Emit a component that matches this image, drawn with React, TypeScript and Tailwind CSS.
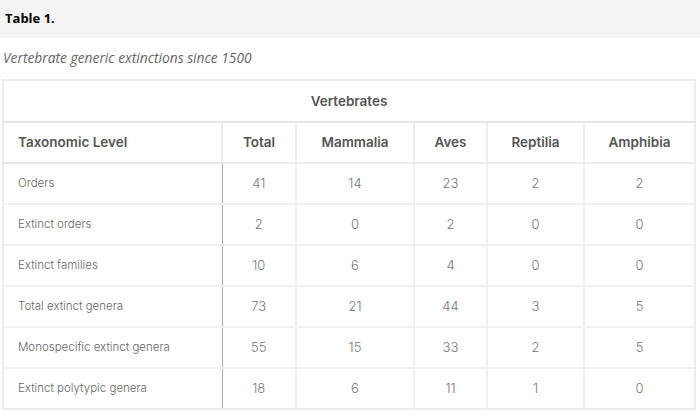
import React from "react";

const rows = [
  ["Orders", "41", "14", "23", "2", "2"],
  ["Extinct orders", "2", "0", "2", "0", "0"],
  ["Extinct families", "10", "6", "4", "0", "0"],
  ["Total extinct genera", "73", "21", "44", "3", "5"],
  ["Monospecific extinct genera", "55", "15", "33", "2", "5"],
  ["Extinct polytypic genera", "18", "6", "11", "1", "0"],
];

const heads = ["Total", "Mammalia", "Aves", "Reptilia", "Amphibia"];

export default function App() {
  return (
    <div className="w-[700px] h-[414px] bg-white overflow-hidden">
      {/* Title bar */}
      <div className="h-[38px] bg-[#f4f4f4] px-[5px] flex items-center">
        <span className="font-['Open_Sans',sans-serif] font-bold text-[13px] text-black">Table 1.</span>
      </div>

      <p className="mt-[11px] pl-[3px] font-['Open_Sans',sans-serif] italic text-[13.8px] text-[#666] leading-[18px]">
        Vertebrate generic extinctions since 1500
      </p>

      <table className="mt-[12px] ml-[2px] w-[694px] table-fixed border-collapse border-2 border-[#ececec] font-['Inter',sans-serif]">
        <colgroup>
          <col className="w-[219px]" />
          <col className="w-[74px]" />
          <col className="w-[118px]" />
          <col className="w-[73px]" />
          <col className="w-[97px]" />
          <col />
        </colgroup>
        <thead>
          <tr className="h-[42px]">
            <th colSpan={6} className="text-center text-[13.5px] font-semibold text-[#555] border-b-2 border-[#e6e6e6]">
              Vertebrates
            </th>
          </tr>
          <tr className="h-[41px]">
            <th className="text-left pl-[14px] text-[13.5px] font-semibold text-[#555] border-b-2 border-[#e6e6e6]">
              Taxonomic Level
            </th>
            {heads.map((h) => (
              <th key={h} className="text-center text-[13.5px] font-semibold text-[#555] border-l-2 border-b-2 border-[#ececec]">
                {h}
              </th>
            ))}
          </tr>
        </thead>
        <tbody>
          {rows.map((r, i) => (
            <tr key={i} className="h-[41px]">
              <td className={`pl-[14px] text-[11.5px] font-light text-[#666] border-r border-r-[#aaa] ${i < rows.length - 1 ? "border-b-2 border-b-[#f0f0f0]" : ""}`}>
                {r[0]}
              </td>
              {r.slice(1).map((v, j) => (
                <td key={j} className={`text-center text-[13px] font-light text-[#777] ${j > 0 ? "border-l-2 border-l-[#f0f0f0]" : ""} ${i < rows.length - 1 ? "border-b-2 border-b-[#f0f0f0]" : ""}`}>
                  {v}
                </td>
              ))}
            </tr>
          ))}
        </tbody>
      </table>
    </div>
  );
}
